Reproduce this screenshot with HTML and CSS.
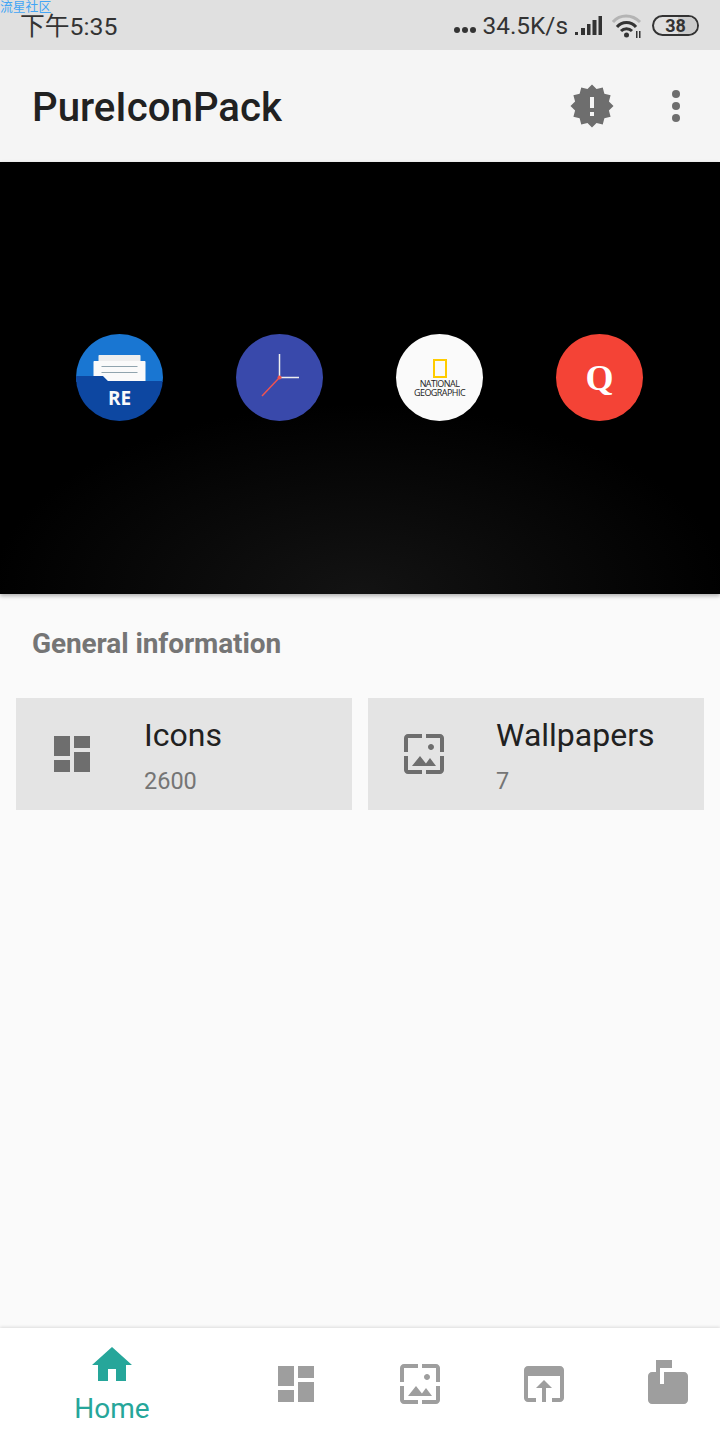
FILE: index.html
```html
<!DOCTYPE html>
<html lang="en">
<head>
<meta charset="utf-8">
<title>PureIconPack</title>
<link rel="stylesheet" href="styles.css">
</head>
<body>
<div class="screen">
  <span class="watermark">流星社区</span>
  <header class="status">
    <span class="time">下午5:35</span>
    <div class="status-right">
      <svg class="dots" width="24" height="8" viewBox="0 0 24 8"><circle cx="4" cy="4" r="3"/><circle cx="12" cy="4" r="3"/><circle cx="20" cy="4" r="3"/></svg>
      <span class="speed">34.5K/s</span>
      <svg class="signal" width="27" height="19" viewBox="0 0 27 19"><path d="M0 16h3v3H0zM6 12h4v7H6zM12 8h3.500v11H12zM17.500 4h4v15h-4zM23.500 0h3.500v19h-3.500z"/></svg>
      <svg class="wifi" width="30" height="24" viewBox="0 0 30 24"><path d="M1 8C8 0 20 0 28 8" fill="none" stroke="#b4b4b4" stroke-width="3"/><path d="M5 13C10 7 19 7 24 13M9 17C12 14 17 14 20 17" fill="none" stroke="#333" stroke-width="3"/><circle cx="14.500" cy="21" r="2.500" fill="#333"/><path d="M24 17h1.500v7H24zM27 17h1.500v7H27z" fill="#333"/></svg>
      <div class="battery"><span class="battery-fill"></span><span class="battery-num">38</span></div>
    </div>
  </header>
  <div class="appbar">
    <h1 class="app-title">PureIconPack</h1>
    <svg class="alert" width="48" height="48" viewBox="0 0 48 48"><polygon points="24,2.500 28.530,7.100 34.750,5.400 36.370,11.630 42.600,13.250 40.900,19.470 45.500,24 40.900,28.530 42.600,34.750 36.370,36.370 34.750,42.600 28.530,40.900 24,45.500 19.470,40.900 13.250,42.600 11.630,36.370 5.400,34.750 7.100,28.530 2.500,24 7.100,19.470 5.400,13.250 11.630,11.630 13.250,5.400 19.470,7.100"/><path class="alert-mark" d="M22 15h4v11h-4zM22 30h4v4h-4z"/></svg>
    <div class="more"><i></i><i></i><i></i></div>
  </div>
  <section class="hero">
    <div class="app-circle re">
      <svg width="87" height="87" viewBox="0 0 87 87">
        <rect width="87" height="48" fill="#1976d2"/>
        <path d="M0 42h27l5 5h55v40H0z" fill="#0d47a1"/>
        <path d="M22.500 22c0-.6.4-1 1-1h40c.6 0 1 .4 1 1v5h-42z" fill="#eeeeee"/>
        <path d="M17.500 28c0-.6.4-1 1-1h50c.6 0 1 .4 1 1v19H32l-5-5H17.500z" fill="#fafafa"/>
        <path d="M25.500 32.500h36M25.500 38.500h36" stroke="#90a4ae" stroke-width="1"/>
      </svg>
      <span class="re-label">RE</span>
    </div>
    <div class="app-circle clock">
      <svg width="87" height="87" viewBox="0 0 87 87"><rect width="87" height="87" fill="#3949ab"/><path d="M43.500 43.500V20M43.500 43.500H63" stroke="#eeeeee" stroke-width="1.500"/><path d="M43.500 43.500L26 62" stroke="#ef5350" stroke-width="1.500"/><circle cx="43.500" cy="43.500" r="2" fill="#ef5350"/></svg>
    </div>
    <div class="app-circle natgeo">
      <span class="ng-frame"></span>
      <span class="ng-text">NATIONAL<br>GEOGRAPHIC</span>
    </div>
    <div class="app-circle quora"><span class="q">Q</span></div>
  </section>
  <main class="content">
    <h2 class="section-title">General information</h2>
    <div class="cards">
      <div class="card">
        <svg class="icon icon-dark" viewBox="0 0 24 24"><path d="M3 13h8V3H3v10zm0 8h8v-6H3v6zm10 0h8V11h-8v10zm0-18v6h8V3h-8z"/></svg>
        <div class="card-text"><span class="card-title">Icons</span><span class="card-num">2600</span></div>
      </div>
      <div class="card">
        <svg class="icon icon-dark" viewBox="0 0 24 24"><path d="M4 4h7V2H4c-1.100 0-2 .9-2 2v7h2V4zm6 9l-4 5h12l-3-4-2.030 2.710L10 13zm7-4.500c0-.83-.67-1.500-1.500-1.500S14 7.670 14 8.500s.67 1.500 1.500 1.500S17 9.330 17 8.500zM20 2h-7v2h7v7h2V4c0-1.100-.9-2-2-2zm0 18h-7v2h7c1.100 0 2-.9 2-2v-7h-2v7zM4 13H2v7c0 1.100.9 2 2 2h7v-2H4v-7z"/></svg>
        <div class="card-text"><span class="card-title">Wallpapers</span><span class="card-num">7</span></div>
      </div>
    </div>
  </main>
  <nav class="bottom">
    <div class="tab tab-active">
      <svg class="icon icon-home" viewBox="0 0 24 24"><path d="M10 20v-6h4v6h5v-8h3L12 3 2 12h3v8z"/></svg>
      <span class="tab-label">Home</span>
    </div>
    <div class="tab"><svg class="icon icon-grey" viewBox="0 0 24 24"><path d="M3 13h8V3H3v10zm0 8h8v-6H3v6zm10 0h8V11h-8v10zm0-18v6h8V3h-8z"/></svg></div>
    <div class="tab"><svg class="icon icon-grey" viewBox="0 0 24 24"><path d="M4 4h7V2H4c-1.100 0-2 .9-2 2v7h2V4zm6 9l-4 5h12l-3-4-2.030 2.710L10 13zm7-4.500c0-.83-.67-1.500-1.500-1.500S14 7.670 14 8.500s.67 1.500 1.500 1.500S17 9.330 17 8.500zM20 2h-7v2h7v7h2V4c0-1.100-.9-2-2-2zm0 18h-7v2h7c1.100 0 2-.9 2-2v-7h-2v7zM4 13H2v7c0 1.100.9 2 2 2h7v-2H4v-7z"/></svg></div>
    <div class="tab"><svg class="icon icon-grey" viewBox="0 0 24 24"><path d="M20 3H4c-1.100 0-2 .9-2 2v14c0 1.100.9 2 2 2h4v-2H4V8h16v11h-4v2h4c1.100 0 2-.9 2-2V5c0-1.100-.9-2-2-2zm-8 7l-4 4h3v7h2v-7h3l-4-4z"/></svg></div>
    <div class="tab"><svg class="icon icon-grey" viewBox="0 0 24 24"><path d="M6 0h8v4H8v8h2V6h10c1.100 0 2 .9 2 2v12c0 1.100-.9 2-2 2H4c-1.100 0-2-.9-2-2V8c0-1.100.9-2 2-2h2z"/></svg></div>
  </nav>
</div>
</body>
</html>
```
FILE: styles.css
```css
* { box-sizing: border-box; }
html, body { margin: 0; padding: 0; }
body { font-family: Roboto, "Noto Sans CJK SC", sans-serif; background: #fafafa; }
.screen { position: relative; width: 720px; height: 1440px; display: flex; flex-direction: column; overflow: hidden; }
.watermark { position: absolute; left: 0; top: 0; font-size: 12.800px; line-height: 14px; color: #42a5f5; }
.status { height: 50px; background: #e0e0e0; display: flex; align-items: center; justify-content: space-between; padding: 3px 21px 0 20px; color: #333; }
.time { font-size: 24.800px; line-height: 30px; }
.status-right { display: flex; align-items: center; }
.dots { fill: #333; margin: 6px 5px 0 0; }
.speed { font-size: 24.400px; line-height: 30px; margin-top: -2px; }
.signal { fill: #333; margin: -3px 10px 0 7px; }
.wifi { margin: -2px 10px 0 0; }
.battery { position: relative; width: 47px; height: 21px; margin-top: -3px; border: 2.500px solid #333; border-radius: 11px; display: flex; align-items: center; justify-content: center; overflow: hidden; }
.battery-fill { position: absolute; right: 0; top: 0; bottom: 0; width: 45%; background: #cbcbcb; }
.battery-num { position: relative; font-size: 18px; font-weight: 700; color: #333; }
.appbar { height: 112px; background: #f5f5f5; display: flex; align-items: center; padding: 0 20px 0 32px; }
.app-title { margin: 3px 0 0; flex: 1; font-size: 40.200px; font-weight: 500; color: #212121; }
.alert { fill: #6e6e6e; margin-right: 36px; }
.alert .alert-mark { fill: #f5f5f5; }
.more { width: 48px; display: flex; flex-direction: column; align-items: center; gap: 4px; }
.more i { width: 8px; height: 8px; border-radius: 50%; background: #6e6e6e; }
.hero { height: 432px; background: radial-gradient(ellipse 370px 190px at 50% 100%, #131313, #000); display: grid; grid-template-columns: repeat(4, 160px); justify-content: center; align-content: start; justify-items: center; padding: 172px 1px 0 0; box-shadow: 0 2px 4px rgba(0,0,0,.3); position: relative; }
.app-circle { position: relative; width: 87px; height: 87px; border-radius: 50%; overflow: hidden; display: flex; flex-direction: column; align-items: center; justify-content: center; }
.app-circle svg { display: block; }
.re-label { position: absolute; left: 0; right: 0; top: 53px; text-align: center; font-family: "Open Sans", sans-serif; font-weight: 700; font-size: 19px; line-height: 22px; color: #fafafa; }
.natgeo { background: #fafafa; justify-content: flex-start; padding-top: 25px; }
.ng-frame { width: 14px; height: 19px; border: 2px solid #ffcc00; }
.ng-text { margin-top: 1px; font-family: "Open Sans", sans-serif; font-size: 9px; line-height: 9px; text-align: center; color: #222; letter-spacing: -.55px; white-space: nowrap; }
.quora { background: #f44336; }
.q { font-family: "Liberation Serif", serif; font-weight: 700; font-size: 36px; line-height: 40px; color: #fff; }
.content { flex: 1; padding: 0 16px; }
.section-title { margin: 32px 16px 37px; font-size: 28px; line-height: 35px; font-weight: 700; color: #757575; letter-spacing: -.1px; }
.cards { display: grid; grid-template-columns: 1fr 1fr; gap: 16px; }
.card { height: 112px; background: #e4e4e4; display: flex; align-items: center; padding-left: 32px; gap: 48px; }
.icon { display: block; width: 48px; height: 48px; flex: none; }
.icon-dark { fill: #6e6e6e; }
.icon-grey { fill: #9e9e9e; }
.icon-home { fill: #26a69a; }
.card-text { display: flex; flex-direction: column; padding-top: 2px; }
.card-title { font-size: 32px; line-height: 40px; color: #212121; }
.card-num { margin-top: 12px; font-size: 23.500px; line-height: 28px; color: #757575; }
.bottom { height: 112px; background: #fff; box-shadow: 0 -1px 3px rgba(0,0,0,.12); display: flex; gap: 76px; padding-left: 88px; position: relative; }
.tab { width: 48px; display: flex; flex-direction: column; align-items: center; padding-top: 32px; }
.tab-active { padding-top: 13px; margin-right: 60px; }
.tab-label { font-size: 28px; line-height: 32px; color: #26a69a; margin-top: 4px; }
```
